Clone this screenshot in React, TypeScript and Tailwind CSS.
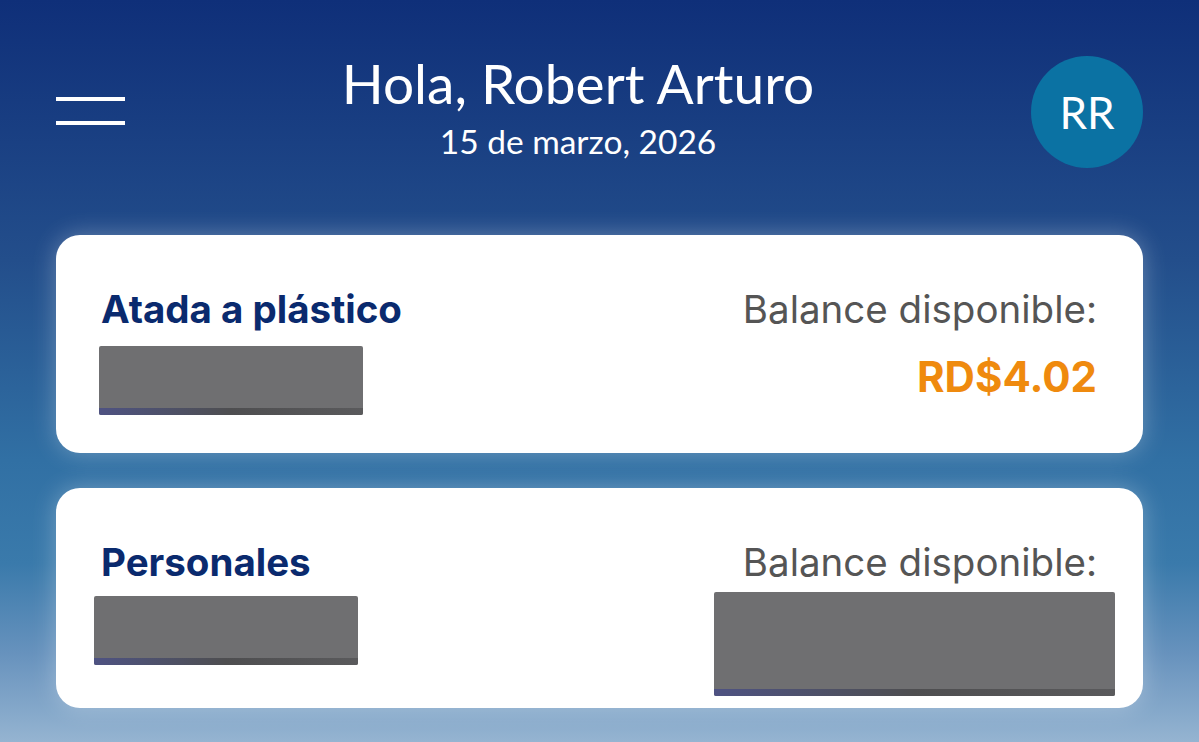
const Redacted = ({ className }: { className: string }) => (
  <div className={`relative overflow-hidden rounded-[2px] bg-[#6f6f71] ${className}`}>
    <div className="absolute inset-x-0 bottom-0 h-[7px] bg-gradient-to-r from-[#4e5282] via-[#4e4e50] to-[#5a5a5c]" />
  </div>
);

const App = () => {
  return (
    <div className="h-screen overflow-hidden bg-[linear-gradient(to_bottom,#0f2f79_0%,#234e8b_35%,#3170a4_62%,#3a7aab_76%,#6792bd_88%,#95b4d1_100%)] px-[56px] font-['Inter',sans-serif]">
      {/* Header */}
      <div className="flex items-start pt-[56px]">
        <button className="mt-[41px] flex w-[69px] flex-col gap-[20px]">
          <span className="block h-[4px] w-full bg-white" />
          <span className="block h-[4px] w-full bg-white" />
        </button>
        <div className="mt-[1px] flex-1 text-center font-['Lato',sans-serif] text-white">
          <h1 className="text-[55px] leading-[52px]">Hola, Robert Arturo</h1>
          <p className="mt-[12px] text-[33.5px] leading-[40px]">15 de marzo, 2026</p>
        </div>
        <div className="flex h-[112px] w-[112px] items-center justify-center rounded-full bg-[#0b72a3] font-['Lato',sans-serif] text-[44px] text-white">
          RR
        </div>
      </div>

      {/* Card 1 */}
      <div className="mt-[67px] flex h-[218px] justify-between rounded-[24px] bg-white pl-[45px] pr-[46px] pt-[51px] shadow-[0_0_24px_rgba(255,255,255,0.3)]">
        <div>
          <h2 className="text-[38.5px] font-bold leading-[46px] text-[#0a2a6e]">Atada a plástico</h2>
          <Redacted className="-ml-[2px] mt-[14px] h-[69px] w-[264px]" />
        </div>
        <div className="text-right">
          <p className="text-[38.5px] leading-[46px] text-[#555555]">Balance disponible:</p>
          <p className="mt-[20px] text-[42px] font-bold leading-[50px] text-[#ef8a0e]">RD$4.02</p>
        </div>
      </div>

      {/* Card 2 */}
      <div className="mt-[35px] flex h-[220px] justify-between rounded-[24px] bg-white pl-[45px] pr-[46px] pt-[51px] shadow-[0_0_24px_rgba(255,255,255,0.3)]">
        <div>
          <h2 className="text-[38.5px] font-bold leading-[46px] text-[#0a2a6e]">Personales</h2>
          <Redacted className="-ml-[7px] mt-[11px] h-[69px] w-[264px]" />
        </div>
        <div className="flex flex-col items-end">
          <p className="text-[38.5px] leading-[46px] text-[#555555]">Balance disponible:</p>
          <Redacted className="-mr-[18px] mt-[7px] h-[104px] w-[401px]" />
        </div>
      </div>
    </div>
  );
};

export default App;
